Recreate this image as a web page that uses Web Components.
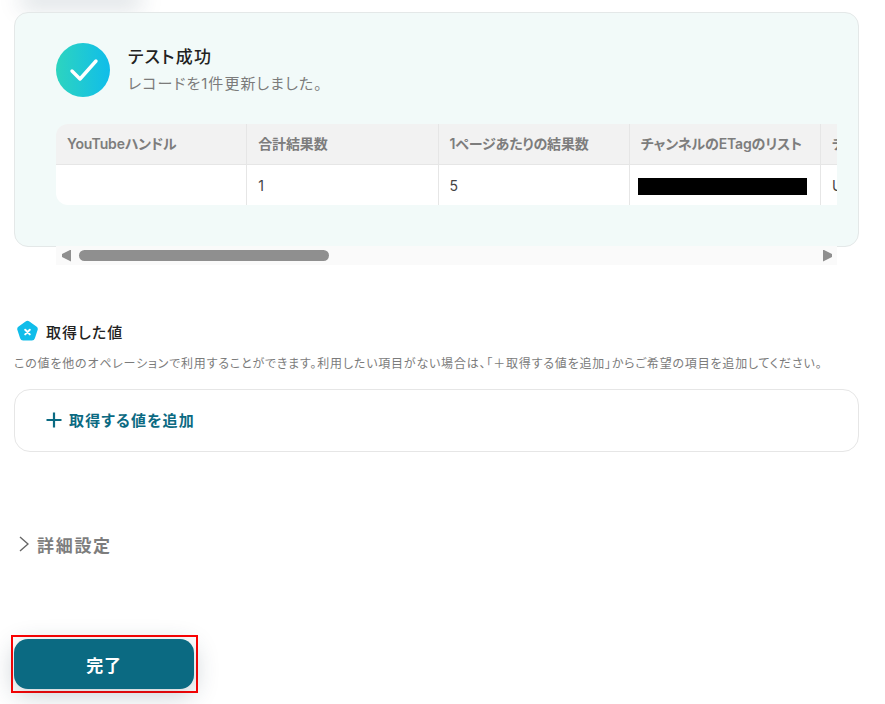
<!DOCTYPE html>
<html lang="ja">
<head>
<meta charset="utf-8">
<title>テスト成功</title>
<style>
  html, body { margin: 0; padding: 0; background: #fff; overflow: hidden; height: 704px; }
  body { font-family: Inter, "Noto Sans CJK JP", sans-serif; color: #222; font-feature-settings: "palt"; }
</style>
</head>
<body>
<template id="result-panel-tpl">
  <style>
    :host { display: block; box-sizing: border-box; height: 235px; margin: 12px 26px 0 14px; padding: 30px 21px 0 41px;
      background: #f2faf9; border: 1px solid #e4e8e8; border-radius: 14px; }
    .head { display: flex; gap: 18px; align-items: center; height: 54px; }
    .badge { width: 54px; height: 54px; flex: none; }
    .title { font-size: 17px; font-weight: 500; letter-spacing: .075em; line-height: 24px; color: #222; margin-bottom: 4px; margin-top: -1px; }
    .sub { font-size: 15px; letter-spacing: .07em; line-height: 22px; color: #7b7b7b; }
    .slot { display: block; margin-top: 27px; }
  </style>
  <div class="head">
    <svg class="badge" viewBox="0 0 54 54">
      <defs><linearGradient id="g" x1="0" x2="1" y1="0" y2="0"><stop offset="0" stop-color="#2dd4bf"/><stop offset="1" stop-color="#10bdea"/></linearGradient></defs>
      <circle cx="27" cy="27" r="27" fill="url(#g)"/>
      <path d="M16 28 L24 36 L40 18" fill="none" stroke="#fff" stroke-width="3.4" stroke-linecap="round" stroke-linejoin="round"/>
    </svg>
    <div>
      <div class="title"><slot name="title"></slot></div>
      <div class="sub"><slot name="sub"></slot></div>
    </div>
  </div>
  <slot class="slot"></slot>
</template>

<template id="data-table-tpl">
  <style>
    :host { display: block; }
    .clip { overflow: hidden; border-radius: 12px 0 0 12px; }
    .grid { display: grid; grid-template-columns: repeat(5, 191.25px); width: max-content; font-size: 14px; }
    .c { box-sizing: border-box; border-right: 1px solid #e6e6e6; padding: 0 11px; display: flex; align-items: center; white-space: nowrap; overflow: hidden; }
    .h { height: 41px; background: #f2f2f2; border-bottom: 1px solid #e6e6e6; color: #7d7d7d; font-weight: 600; letter-spacing: -.01em; padding-bottom: 2px; }
    .d { height: 40px; background: #fff; color: #444; }
    .mask { display: block; width: 169px; height: 17px; margin: 3px 0 0 -3px; background: #000; }
    .bar { display: flex; align-items: center; height: 19px; margin-top: 41px; background: #fafafa; padding: 0 5px 0 6px; gap: 8px; box-sizing: border-box; }
    .thumb { width: 250px; height: 11px; border-radius: 6px; background: #8f8f8f; }
    .fill { flex: 1; }
    .arrow { width: 9px; height: 12px; background: #8f8f8f; flex: none; }
    .l { clip-path: polygon(100% 0, 100% 100%, 0 62%, 0 38%); }
    .r { clip-path: polygon(0 0, 0 100%, 100% 62%, 100% 38%); }
  </style>
  <div class="clip">
    <div class="grid">
      <div class="c h">YouTubeハンドル</div>
      <div class="c h">合計結果数</div>
      <div class="c h">1ページあたりの結果数</div>
      <div class="c h">チャンネルのETagのリスト</div>
      <div class="c h">チャンネルID</div>
      <div class="c d"></div>
      <div class="c d">1</div>
      <div class="c d">5</div>
      <div class="c d"><span class="mask"></span></div>
      <div class="c d">UC</div>
    </div>
  </div>
  <div class="bar">
    <span class="arrow l"></span><span class="thumb"></span><span class="fill"></span><span class="arrow r"></span>
  </div>
</template>

<template id="values-section-tpl">
  <style>
    :host { display: block; margin: 72px 26px 0 14px; }
    .h { display: flex; align-items: center; gap: 7px; height: 24px; padding-left: 2px; font-size: 15px; font-weight: 500; letter-spacing: .07em; color: #222; }
    svg.logo { width: 23px; height: 23px; flex: none; }
    .desc { font-size: 12px; line-height: 18px; letter-spacing: .067em; color: #7b7b7b; margin-top: 12px; white-space: nowrap; }
    .add { box-sizing: border-box; height: 63px; margin-top: 16px; padding-bottom: 2px; border: 1px solid #e6e6e6; border-radius: 16px; background: #fff;
      display: flex; align-items: center; gap: 7px; padding-left: 31px; color: #0b6a82; font-size: 15px; font-weight: 600; letter-spacing: .077em; }
    .add svg { width: 16px; height: 16px; flex: none; }
  </style>
  <div class="h">
    <svg class="logo" viewBox="0 0 23 23">
      <path d="M9.6 1.4 a3.2 3.2 0 0 1 3.8 0 l7 5.1 a3.2 3.2 0 0 1 1.2 3.6 l-2.7 8.2 a3.2 3.2 0 0 1 -3 2.2 h-8.8 a3.2 3.2 0 0 1 -3 -2.2 l-2.7 -8.2 a3.2 3.2 0 0 1 1.2 -3.6 z" fill="#10bdea"/>
      <path d="M9.2 9.8 L13.8 14.4 M13.8 9.8 L9.2 14.4" stroke="#fff" stroke-width="2" stroke-linecap="round"/>
    </svg>
    <slot name="title"></slot>
  </div>
  <div class="desc"><slot name="desc"></slot></div>
  <div class="add">
    <svg viewBox="0 0 16 16"><path d="M8 .5v15M.5 8h15" stroke="#0b6a82" stroke-width="2.2" fill="none"/></svg>
    <slot name="add"></slot>
  </div>
</template>

<template id="detail-toggle-tpl">
  <style>
    :host { display: flex; align-items: center; gap: 8px; margin: 80px 0 0 19px; height: 24px; font-size: 17px; font-weight: 600; letter-spacing: .1em; color: #7d7d7d; }
    svg { width: 10px; height: 16px; flex: none; }
  </style>
  <svg viewBox="0 0 10 16"><path d="M1 1 L9 8 L1 15" fill="none" stroke="#666" stroke-width="1.4"/></svg>
  <slot></slot>
</template>

<template id="finish-button-tpl">
  <style>
    :host { display: block; width: fit-content; margin: 79px 0 0 11px; border: 2px solid #f00; padding: 2px 2px 2px 1px; }
    button { display: block; width: 180px; height: 50px; border: 0; border-radius: 14px; background: #0b6a82; color: #fff; font: 600 17px Inter, "Noto Sans CJK JP", sans-serif; letter-spacing: .05em; box-shadow: 0 6px 24px rgba(30, 60, 80, .25); }
  </style>
  <button type="button"><slot></slot></button>
</template>

<template id="top-shadow-tpl">
  <style>
    :host { display: block; width: 110px; height: 0; margin-left: 26px; box-shadow: 0 0 22px 5px rgba(30, 60, 80, .28); }
  </style>
</template>

<top-shadow></top-shadow>
<result-panel>
  <span slot="title">テスト成功</span>
  <span slot="sub">レコードを1件更新しました。</span>
  <data-table></data-table>
</result-panel>
<values-section>
  <span slot="title">取得した値</span>
  <span slot="desc">この値を他のオペレーションで利用することができます。利用したい項目がない場合は、「＋取得する値を追加」からご希望の項目を追加してください。</span>
  <span slot="add">取得する値を追加</span>
</values-section>
<detail-toggle>詳細設定</detail-toggle>
<finish-button>完了</finish-button>

<script>
  // every element just stamps its own template into an open shadow root
  const names = ['result-panel', 'data-table', 'values-section', 'detail-toggle', 'finish-button', 'top-shadow'];
  names.forEach((name) => {
    customElements.define(name, class extends HTMLElement {
      constructor() {
        super();
        const tpl = document.getElementById(name + '-tpl');
        this.attachShadow({ mode: 'open' }).appendChild(tpl.content.cloneNode(true));
      }
    });
  });
</script>
</body>
</html>
